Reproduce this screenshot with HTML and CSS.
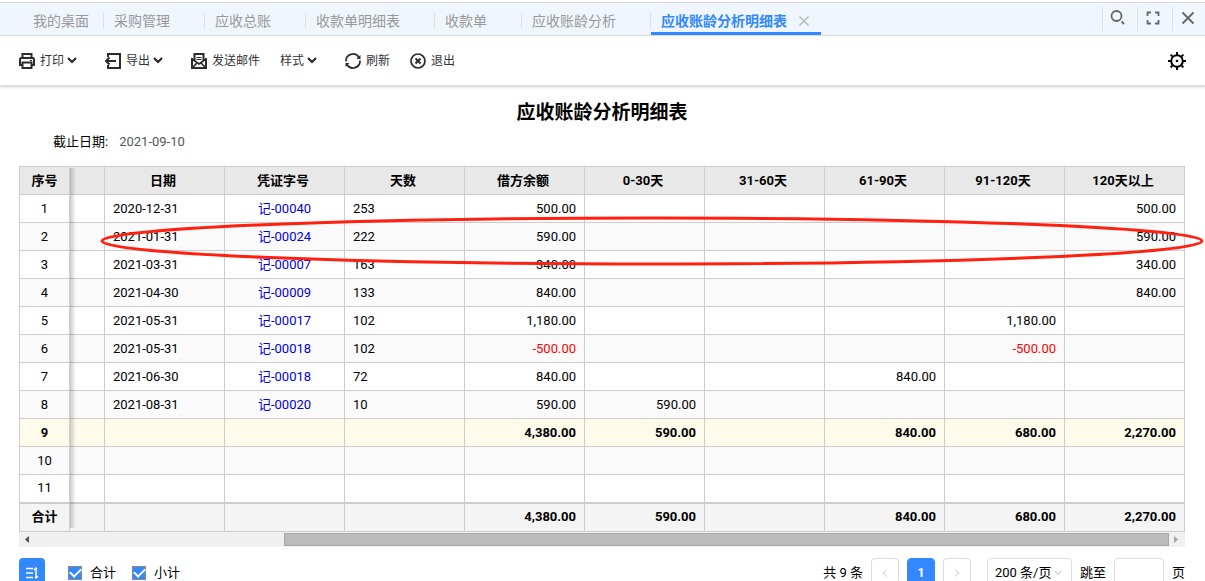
FILE: index.html
```html
<!DOCTYPE html>
<html lang="zh-CN">
<head>
<meta charset="utf-8">
<title>应收账龄分析明细表</title>
<link rel="stylesheet" href="styles.css">
</head>
<body>
<nav class="tabs">
  <div class="tab-list">
    <a class="tab tab-home" href="#">我的桌面</a>
    <a class="tab" href="#">采购管理</a>
    <a class="tab" href="#">应收总账</a>
    <a class="tab" href="#">收款单明细表</a>
    <a class="tab" href="#">收款单</a>
    <a class="tab" href="#">应收账龄分析</a>
    <div class="tab active"><a href="#">应收账龄分析明细表</a><button class="tab-close" aria-label="关闭标签"><svg width="10" height="10" viewBox="0 0 10 10"><path d="M0.5 0.5l9 9M9.5 0.5l-9 9"/></svg></button></div>
  </div>
  <div class="window-tools">
    <button aria-label="搜索"><svg width="16" height="16" viewBox="0 0 16 16"><circle cx="6.500" cy="6" r="5"/><path d="M11.500 11.500l2.500 2.500"/></svg></button>
    <button aria-label="全屏"><svg width="16" height="16" viewBox="0 0 16 16"><path d="M2.500 6V2.500H6M10 2.500H13.500V6M13.500 10V13.500H10M6 13.500H2.500V10"/></svg></button>
    <button aria-label="关闭"><svg width="16" height="16" viewBox="0 0 16 16"><path d="M2.500 2.500l11 11M13.500 2.500L2.500 13.500"/></svg></button>
  </div>
</nav>

<header class="toolbar">
  <button class="tool menu"><svg class="icon" width="16" height="16" viewBox="0 0 16 16"><path d="M3.500 5V1H12.500V5M3 12H1V6L2 5H14L15 6V12H13M3.500 9.500H12.500V15H3.500Z"/><path class="thin" d="M11 7.500h2"/></svg>打印<svg class="caret" width="10" height="7" viewBox="0 0 10 7"><path d="M1 1l4 4l4-4"/></svg></button>
  <button class="tool menu"><svg class="icon" width="16" height="16" viewBox="0 0 16 16"><path d="M3 4V1H15V15H3V12M1 8H11M4.500 4.500L1 8L4.500 11.500"/></svg>导出<svg class="caret" width="10" height="7" viewBox="0 0 10 7"><path d="M1 1l4 4l4-4"/></svg></button>
  <button class="tool"><svg class="icon" width="16" height="16" viewBox="0 0 16 16"><path d="M3.500 8V1H12.500V8M1 5V15H15V5"/><path class="medium" d="M1 6L8 11L15 6M1 15L6 10M15 15L10 10"/><path class="thin" d="M5.500 4.500H10.500M5.500 6.500H10.500"/></svg>发送邮件</button>
  <button class="tool menu">样式<svg class="caret" width="10" height="7" viewBox="0 0 10 7"><path d="M1 1l4 4l4-4"/></svg></button>
  <button class="tool"><svg class="icon" width="16" height="16" viewBox="0 0 16 16"><path class="medium" d="M1 8.500A7 7 0 0 1 14 4.500M15 7.500A7 7 0 0 1 2 11.500"/><path class="solid" d="M15.500 2V6H11.500ZM0.500 14V10H4.500Z"/></svg>刷新</button>
  <button class="tool"><svg class="icon" width="16" height="16" viewBox="0 0 16 16"><circle class="medium" cx="8" cy="8" r="7"/><path d="M5.500 5.500l5 5M10.500 5.500l-5 5"/></svg>退出</button>
  <button class="settings" aria-label="设置"><svg width="18" height="18" viewBox="0 0 18 18"><circle cx="9" cy="9" r="5.800"/><path d="M9 0V3M9 15V18M0 9H3M15 9H18M2.600 2.600L4.900 4.900M13.100 13.100L15.400 15.400M2.600 15.400L4.900 13.100M13.100 4.900L15.400 2.600"/><circle class="dot" cx="9" cy="9" r="1.300"/></svg></button>
</header>

<main class="report">
  <h1>应收账龄分析明细表</h1>
  <p class="as-of">截止日期:<time datetime="2021-09-10">2021-09-10</time></p>

  <div class="grid">
    <table>
      <colgroup><col class="col-no"><col class="col-part"><col span="9"></colgroup>
      <thead>
        <tr><th>序号</th><th></th><th>日期</th><th>凭证字号</th><th>天数</th><th>借方余额</th><th>0-30天</th><th>31-60天</th><th>61-90天</th><th>91-120天</th><th>120天以上</th></tr>
      </thead>
      <tbody>
        <tr><td>1</td><td></td><td>2020-12-31</td><td><a href="#">记-00040</a></td><td>253</td><td>500.00</td><td></td><td></td><td></td><td></td><td>500.00</td></tr>
        <tr><td>2</td><td></td><td>2021-01-31</td><td><a href="#">记-00024</a></td><td>222</td><td>590.00</td><td></td><td></td><td></td><td></td><td>590.00</td></tr>
        <tr><td>3</td><td></td><td>2021-03-31</td><td><a href="#">记-00007</a></td><td>163</td><td>340.00</td><td></td><td></td><td></td><td></td><td>340.00</td></tr>
        <tr><td>4</td><td></td><td>2021-04-30</td><td><a href="#">记-00009</a></td><td>133</td><td>840.00</td><td></td><td></td><td></td><td></td><td>840.00</td></tr>
        <tr><td>5</td><td></td><td>2021-05-31</td><td><a href="#">记-00017</a></td><td>102</td><td>1,180.00</td><td></td><td></td><td></td><td>1,180.00</td><td></td></tr>
        <tr><td>6</td><td></td><td>2021-05-31</td><td><a href="#">记-00018</a></td><td>102</td><td class="negative">-500.00</td><td></td><td></td><td></td><td class="negative">-500.00</td><td></td></tr>
        <tr><td>7</td><td></td><td>2021-06-30</td><td><a href="#">记-00018</a></td><td>72</td><td>840.00</td><td></td><td></td><td>840.00</td><td></td><td></td></tr>
        <tr><td>8</td><td></td><td>2021-08-31</td><td><a href="#">记-00020</a></td><td>10</td><td>590.00</td><td>590.00</td><td></td><td></td><td></td><td></td></tr>
        <tr class="subtotal"><td>9</td><td></td><td></td><td></td><td></td><td>4,380.00</td><td>590.00</td><td></td><td>840.00</td><td>680.00</td><td>2,270.00</td></tr>
        <tr><td>10</td><td></td><td></td><td></td><td></td><td></td><td></td><td></td><td></td><td></td><td></td></tr>
        <tr><td>11</td><td></td><td></td><td></td><td></td><td></td><td></td><td></td><td></td><td></td><td></td></tr>
      </tbody>
      <tfoot>
        <tr><td>合计</td><td></td><td></td><td></td><td></td><td>4,380.00</td><td>590.00</td><td></td><td>840.00</td><td>680.00</td><td>2,270.00</td></tr>
      </tfoot>
    </table>
    <div class="freeze-shadow"></div>
    <svg class="highlight" viewBox="0 0 1104 52" preserveAspectRatio="none"><ellipse cx="552" cy="26" rx="550" ry="23"/></svg>
  </div>
  <div class="scrollbar">
    <svg width="16" height="15" viewBox="0 0 16 15"><path fill="#505050" d="M10 4v7l-4-3.500z"/></svg>
    <div class="track"><div class="thumb"></div></div>
    <svg width="16" height="15" viewBox="0 0 16 15"><path fill="#a3a3a3" d="M5 4v7l4-3.500z"/></svg>
  </div>

  <footer class="pager">
    <button class="sort" aria-label="行高"><svg width="14" height="14" viewBox="0 0 14 14"><path d="M1 2.500H8M1 7H8M1 11.500H8M11 2V12M9 4L11 2L12 3M13 10L11 12L10 11"/></svg></button>
    <label class="check"><input type="checkbox" checked>合计</label>
    <label class="check"><input type="checkbox" checked>小计</label>
    <span class="count">共 9 条</span>
    <button class="page" aria-label="上一页"><svg width="6" height="8" viewBox="0 0 6 8"><path d="M5 0.500L1 4L5 7.500"/></svg></button>
    <button class="page current">1</button>
    <button class="page" aria-label="下一页"><svg width="6" height="8" viewBox="0 0 6 8"><path d="M1 0.500L5 4L1 7.500"/></svg></button>
    <div class="page-size">
      <select aria-label="每页条数"><option>200 条/页</option></select>
      <svg width="8" height="6" viewBox="0 0 8 6"><path d="M1 1L4 4.500L7 1"/></svg>
    </div>
    <label class="jump">跳至<input type="text">页</label>
  </footer>
</main>
</body>
</html>
```

FILE: styles.css
```css
* { box-sizing: border-box; }
body {
  margin: 0;
  height: 100vh;
  overflow: hidden;
  background: #fff;
  color: #000;
  font: 13px/20px Roboto, "Noto Sans CJK SC", sans-serif;
}
button, input, select { font: inherit; color: inherit; margin: 0; }
button { background: none; border: 0; padding: 0; cursor: pointer; }
a { text-decoration: none; }
svg { display: block; fill: none; flex: none; }

.tabs {
  display: flex;
  justify-content: space-between;
  margin-top: 2px;
  height: 34px;
  background: #f0f6fe;
  border-top: 1px solid #d9dadd;
  border-bottom: 1px solid #e1e5ee;
}
.tab-list { display: flex; padding-left: 23px; font-size: 14px; }
.tab {
  display: flex;
  align-items: center;
  padding: 4px 35px 0 10px;
  color: #999;
  white-space: nowrap;
  background: linear-gradient(#dde2ea, #dde2ea) right 10px / 1px 16px no-repeat;
}
.tab.tab-home { padding-right: 15px; }
.tab.active {
  gap: 12px;
  padding: 4px 12px 0 10px;
  background: none;
  box-shadow: inset 0 -3px #3388ff;
  font-weight: bold;
}
.tab.active a { color: #3388ff; }
.tab-close svg { stroke: #bbb; stroke-width: 1.5; }
.window-tools { display: flex; align-items: center; margin-right: -2px; }
.window-tools button {
  width: 35px;
  height: 24px;
  display: flex;
  align-items: center;
  justify-content: center;
  border-left: 1px solid #dde2ea;
  padding: 0 4px 2px 0;
}
.window-tools svg { stroke: #666; stroke-width: 1.8; }

.toolbar {
  display: flex;
  align-items: center;
  height: 50px;
  padding: 0 19px;
  border-bottom: 1px solid #ddd;
  box-shadow: 0 1px 3px #0003;
  font-size: 12px;
}
.tool { display: flex; align-items: center; margin-right: 20px; color: #333; }
.tool.menu { margin-right: 28px; }
.tool .icon { margin-right: 5px; stroke: #2c2c2c; stroke-width: 2; }
.tool .caret { margin-left: 3px; stroke: #222; stroke-width: 2; }
.tool .thin { stroke-width: 1; }
.tool .medium { stroke-width: 1.7; }
.tool .solid { fill: #2c2c2c; stroke: none; }
.settings { margin-left: auto; }
.settings svg { stroke: #000; stroke-width: 2; }
.settings .dot { fill: #000; stroke: none; }

.report { padding: 16px 20px 0 19px; }
h1 { margin: 0; font-size: 19px; line-height: 22px; text-align: center; }
.as-of { display: flex; gap: 11px; margin: 8px 0 14px; padding-left: 34px; }
.as-of time { color: #555; }

.grid { position: relative; }
table {
  width: 100%;
  table-layout: fixed;
  border-collapse: collapse;
}
.col-no { width: 50px; }
.col-part { width: 35px; }
th, td {
  height: 28px;
  padding: 0 8px;
  border: 1px solid #ccc;
  text-align: right;
  line-height: 20px;
}
th { background: #e8e8e8; text-align: center; padding: 0 4px 0 1px; }
th:first-child { padding: 0; }
tbody tr:nth-child(even) { background: #fafafa; }
td:nth-child(3), td:nth-child(5) { text-align: left; }
td:nth-child(1), td:nth-child(4) { text-align: center; }
td:nth-child(1) { padding: 0; }
td a { color: #0000e5; }
td.negative { color: #f00; }
tbody tr.subtotal { background: #fffbea; font-weight: bold; }
tfoot { background: #f4f4f4; font-weight: bold; }
tfoot td { height: 29px; border-top: 2px solid #ccc; }
.freeze-shadow {
  position: absolute;
  top: 2px;
  bottom: 4px;
  left: 51px;
  width: 6px;
  background: linear-gradient(to right, #0003, #0000);
}
.highlight {
  position: absolute;
  top: 49px;
  left: 81px;
  width: calc(100% - 62px);
  height: 52px;
  pointer-events: none;
}
.highlight ellipse { stroke: #ff2010; stroke-width: 3; }

.scrollbar { display: flex; height: 15px; background: #f0f0f0; }
.track { flex: 1; padding: 1px 0; }
.thumb { width: 78%; height: 13px; margin-left: auto; background: #bbb; border: 1px solid #a6a6a6; }

.pager { display: flex; align-items: center; padding-top: 11px; }
.pager button, .page-size select, .jump input { height: 29px; border-radius: 4px; }
.pager button { display: flex; align-items: center; justify-content: center; }
.pager .sort { width: 26px; margin-right: 23px; background: #3388ff; }
.sort svg { stroke: #fff; stroke-width: 1.5; }
.check { display: flex; align-items: center; gap: 8px; margin-right: 16px; }
.check input {
  appearance: none;
  width: 14px;
  height: 14px;
  border: 1px solid #8a8a8a;
  background: #3388ff;
  display: grid;
  place-items: center;
}
.check input::before {
  content: "";
  width: 9px;
  height: 5px;
  border: solid #fff;
  border-width: 0 0 2px 2px;
  transform: rotate(-45deg);
  margin-bottom: 3px;
}
.count { margin-left: auto; }
.pager .page { width: 28px; margin-left: 8px; border: 1px solid #ddd; }
.page svg { stroke: #ccc; }
.pager .page.current { background: #3388ff; border-color: #3388ff; color: #fff; font-weight: bold; }
.page-size { display: grid; align-items: center; margin: 0 8px 0 16px; }
.page-size > * { grid-area: 1 / 1; }
.page-size select {
  appearance: none;
  width: 85px;
  padding: 0 7px;
  border: 1px solid #ddd;
  background: #fff;
}
.page-size svg { justify-self: end; margin-right: 10px; stroke: #bbb; pointer-events: none; }
.jump { display: flex; align-items: center; gap: 8px; }
.jump input { width: 50px; border: 1px solid #ddd; background: #fff; }
```
